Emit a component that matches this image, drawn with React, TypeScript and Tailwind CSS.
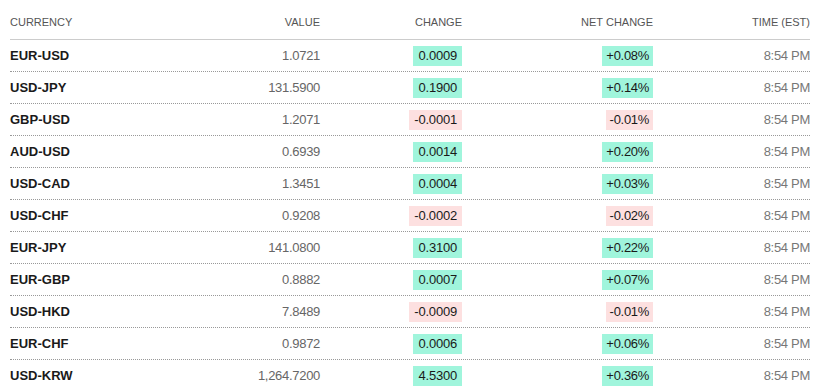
const rows = [
	{ pair: "EUR-USD", value: "1.0721", change: "0.0009", net: "+0.08%", up: true },
	{ pair: "USD-JPY", value: "131.5900", change: "0.1900", net: "+0.14%", up: true },
	{ pair: "GBP-USD", value: "1.2071", change: "-0.0001", net: "-0.01%", up: false },
	{ pair: "AUD-USD", value: "0.6939", change: "0.0014", net: "+0.20%", up: true },
	{ pair: "USD-CAD", value: "1.3451", change: "0.0004", net: "+0.03%", up: true },
	{ pair: "USD-CHF", value: "0.9208", change: "-0.0002", net: "-0.02%", up: false },
	{ pair: "EUR-JPY", value: "141.0800", change: "0.3100", net: "+0.22%", up: true },
	{ pair: "EUR-GBP", value: "0.8882", change: "0.0007", net: "+0.07%", up: true },
	{ pair: "USD-HKD", value: "7.8489", change: "-0.0009", net: "-0.01%", up: false },
	{ pair: "EUR-CHF", value: "0.9872", change: "0.0006", net: "+0.06%", up: true },
	{ pair: "USD-KRW", value: "1,264.7200", change: "4.5300", net: "+0.36%", up: true },
];

const cols = "grid grid-cols-[130px_180px_142px_191px_157px] items-center";

export default function App() {
	return (
		<div className="min-h-screen bg-white px-[10px] font-['Liberation_Sans',Arial,sans-serif] text-[13px]">
			<div className={`${cols} h-[40px] border-b border-[#cccccc] pt-[5px] text-[11px] uppercase text-[#555555]`}>
				<div>Currency</div>
				<div className="text-right">Value</div>
				<div className="text-right">Change</div>
				<div className="text-right">Net Change</div>
				<div className="text-right">Time (EST)</div>
			</div>
			{rows.map((row, i) => (
				<div
					key={row.pair}
					className={`${cols} h-[32px] ${i < rows.length - 1 ? "border-b border-dotted border-[#999999]" : ""}`}
				>
					<div className="font-bold text-[#1a1a1a]">{row.pair}</div>
					<div className="text-right tracking-[-0.3px] text-[#666666]">{row.value}</div>
					<div className="flex justify-end">
						<span
							className={`h-[20px] px-[5px] leading-[20px] tracking-[-0.2px] text-[#1a1a1a] ${row.up ? "bg-[#a0f5dc]" : "bg-[#fde0e0]"}`}
						>
							{row.change}
						</span>
					</div>
					<div className="flex justify-end">
						<span
							className={`h-[20px] px-[4px] leading-[20px] tracking-[-0.3px] text-[#1a1a1a] ${row.up ? "bg-[#a0f5dc]" : "bg-[#fde0e0]"}`}
						>
							{row.net}
						</span>
					</div>
					<div className="text-right tracking-[-0.3px] text-[#777777]">8:54 PM</div>
				</div>
			))}
		</div>
	);
}
